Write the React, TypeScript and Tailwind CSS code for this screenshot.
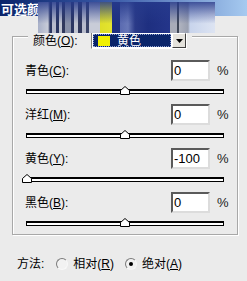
import React from 'react';

const rows = [
  { name: '青色', key: 'C', value: 0 },
  { name: '洋红', key: 'M', value: 0 },
  { name: '黄色', key: 'Y', value: -100 },
  { name: '黑色', key: 'B', value: 0 },
];

const TRACK_W = 198;

const Thumb: React.FC<{ value: number }> = ({ value }) => {
  const left = Math.round(((value + 100) / 200) * (TRACK_W - 2)) - 5;
  return (
    <svg
      className="absolute bottom-[-2px]"
      style={{ left }}
      width="10"
      height="9"
      viewBox="0 0 10 9"
    >
      <path d="M0.5 8.5 V4.5 L5 0.5 L9.5 4.5 V8.5 Z" fill="#ffffff" stroke="#000000" />
    </svg>
  );
};

const Radio: React.FC<{ checked?: boolean }> = ({ checked }) => (
  <span className="w-[12px] h-[12px] rounded-full border border-t-[#7a7a7a] border-l-[#7a7a7a] border-r-[#f8f8f8] border-b-[#f8f8f8] bg-[#f2f2f2] flex items-center justify-center">
    {checked && <span className="w-[4px] h-[4px] rounded-full bg-black" />}
  </span>
);

export default function App() {
  return (
    <div className="w-[247px] h-[281px] bg-[#ebebeb] relative overflow-hidden text-[12px] text-black font-['Liberation_Sans','Noto_Sans_CJK_SC',sans-serif] leading-none">
      {/* title bar */}
      <div className="h-[16px] bg-[linear-gradient(to_right,#0a246a,#3a5aa8_45%,#a6caf0)] flex items-center pl-[1px] text-white font-bold text-[13px] font-['Noto_Sans_CJK_SC',sans-serif]">
        可选颜色选项
      </div>

      {/* smeared drag artifact over the title */}
      <div className="absolute left-[38px] top-[2px] w-[177px] h-[31px] bg-[linear-gradient(to_bottom,rgba(38,58,140,0.85)_0%,rgba(38,58,140,0.35)_40%,rgba(38,58,140,0)_70%),linear-gradient(to_right,#a8b0c8_0px,#c8ccd8_10px,#2a3560_12px,#2a3560_14px,#b8bccc_14px,#b8bccc_18px,#2a3560_18px,#2a3560_21px,#c0c4d0_21px,#c0c4d0_24px,#30385c_24px,#30385c_27px,#8890a8_27px,#8890a8_33px,#2a3560_33px,#2a3560_36px,#c0c4d0_36px,#c0c4d0_40px,#30385c_40px,#30385c_44px,#b8bccc_44px,#b8bccc_48px,#3a4468_48px,#3a4468_51px,#c8ccd8_51px,#c8ccd8_62px,#dede28_62px,#e4e430_74px,#1e2f80_74px,#1e2f80_82px,#5a6ab0_82px,#6878b8_90px,#2a3a88_97px,#1e2f80_110px,#24358a_132px,#a8acb8_132px,#a8acb8_139px,#404858_139px,#404858_141px,#b0b4c0_141px,#9aa0b0_150px,#c8d4ec_152px,#dde4f2_177px)]" />

      {/* group box */}
      <div className="ml-[12px] mt-[20px] w-[226px] h-[199px] border border-[#a8a8a8] shadow-[inset_1px_1px_0_#ffffff,1px_1px_0_#ffffff]">
        <div className="ml-[15px] -mt-[5px] w-fit h-[17px] flex items-center bg-[#ebebeb] pl-[5px] pr-[5px]">
          <span className="w-[58px] font-['Liberation_Sans','Noto_Sans_CJK_SC',sans-serif]">
            颜色(<span className="underline underline-offset-1">O</span>):
          </span>
          <div className="w-[96px] h-[17px] border border-t-[#808080] border-l-[#808080] border-r-[#ffffff] border-b-[#ffffff] bg-white flex">
            <div className="flex-1 m-[1px] bg-[#0a246a] border border-dotted border-[#8da0d0] flex items-center">
              <span className="ml-[4px] w-[12px] h-[10px] bg-[#f0f000]" />
              <span className="ml-[7px] text-white">黄色</span>
            </div>
            <div className="w-[14px] bg-[#e4e2dc] border border-t-[#ffffff] border-l-[#ffffff] border-r-[#404040] border-b-[#404040] flex items-center justify-center">
              <svg width="7" height="4" viewBox="0 0 7 4">
                <path d="M0 0 H7 L3.5 4 Z" fill="#000000" />
              </svg>
            </div>
          </div>
        </div>

        <div className="mt-[11px] pl-[12px]">
          {rows.map((r) => (
            <div key={r.key} className="h-[44px]">
              <div className="flex items-center h-[21px]">
                <span className="w-[146px]">
                  {r.name}(<span className="underline underline-offset-1">{r.key}</span>):
                </span>
                <div className="w-[39px] h-[21px] border-2 border-t-[#5a5a5a] border-l-[#5a5a5a] border-r-[#dcdcdc] border-b-[#dcdcdc] bg-white flex items-center pl-[1px] text-[13px]">
                  {r.value}
                </div>
                <span className="ml-[7px] text-[13px] text-[#202020]">%</span>
              </div>
              <div className="ml-[1px] mt-[8px] w-[198px] h-[5px] border border-t-2 border-black bg-white relative">
                <Thumb value={r.value} />
              </div>
            </div>
          ))}
        </div>
      </div>

      {/* method */}
      <div className="mt-[22px] ml-[17px] flex items-center h-[14px]">
        <span>方法:</span>
        <span className="ml-[12px]"><Radio /></span>
        <span className="ml-[5px]">相对(<span className="underline underline-offset-1">R</span>)</span>
        <span className="ml-[11px]"><Radio checked /></span>
        <span className="ml-[5px]">绝对(<span className="underline underline-offset-1">A</span>)</span>
      </div>
    </div>
  );
}
